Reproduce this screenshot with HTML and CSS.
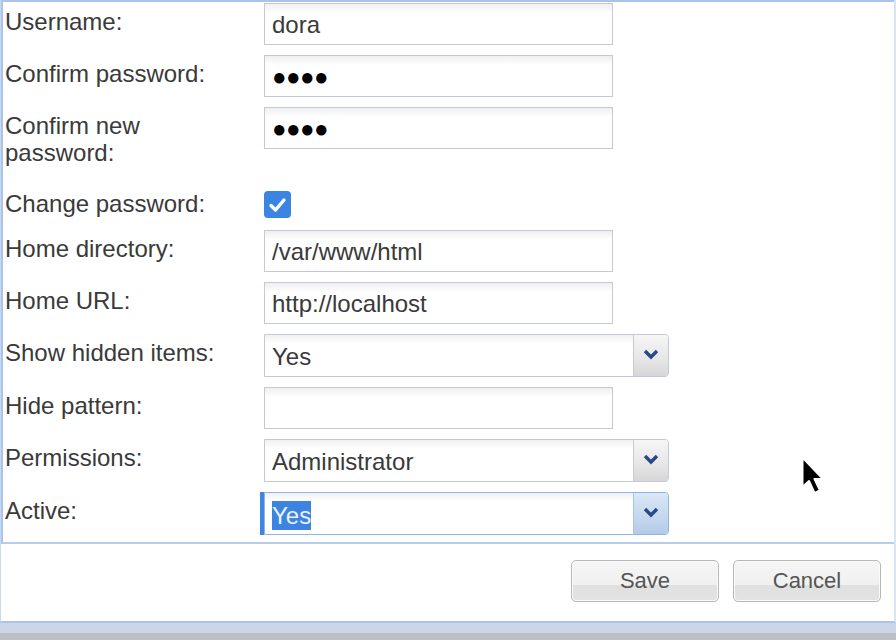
FILE: index.html
```html
<!DOCTYPE html>
<html>
<head>
<meta charset="utf-8">
<link rel="stylesheet" href="styles.css">
</head>
<body>
<div class="dialog">
  <div class="panel">
    <div class="form">
      <div class="row">
        <label class="label">Username:</label>
        <div class="input">dora</div>
      </div>
      <div class="row">
        <label class="label">Confirm password:</label>
        <div class="input dots">&#9679;&#9679;&#9679;&#9679;</div>
      </div>
      <div class="row tall">
        <label class="label">Confirm new password:</label>
        <div class="input dots">&#9679;&#9679;&#9679;&#9679;</div>
      </div>
      <div class="row check-row">
        <label class="label">Change password:</label>
        <div class="checkbox">
          <svg width="27" height="27" viewBox="0 0 27 27"><path d="M7 14.5 L11.5 19 L20 9" fill="none" stroke="#fff" stroke-width="3.4" stroke-linecap="round" stroke-linejoin="round"/></svg>
        </div>
      </div>
      <div class="row">
        <label class="label">Home directory:</label>
        <div class="input">/var/www/html</div>
      </div>
      <div class="row">
        <label class="label">Home URL:</label>
        <div class="input">http://localhost</div>
      </div>
      <div class="row">
        <label class="label">Show hidden items:</label>
        <div class="select">
          <span class="select-text">Yes</span>
          <span class="select-btn"><svg width="16" height="11" viewBox="0 0 16 11"><path d="M2 2 L8 8 L14 2" fill="none" stroke="#27498a" stroke-width="3.4"/></svg></span>
        </div>
      </div>
      <div class="row">
        <label class="label">Hide pattern:</label>
        <div class="input"></div>
      </div>
      <div class="row">
        <label class="label">Permissions:</label>
        <div class="select">
          <span class="select-text">Administrator</span>
          <span class="select-btn"><svg width="16" height="11" viewBox="0 0 16 11"><path d="M2 2 L8 8 L14 2" fill="none" stroke="#27498a" stroke-width="3.4"/></svg></span>
        </div>
      </div>
      <div class="row">
        <label class="label">Active:</label>
        <div class="select focused">
          <span class="select-text"><span class="hl">Yes</span></span>
          <span class="select-btn"><svg width="16" height="11" viewBox="0 0 16 11"><path d="M2 2 L8 8 L14 2" fill="none" stroke="#27498a" stroke-width="3.4"/></svg></span>
        </div>
      </div>
    </div>
  </div>
  <div class="actions">
    <button class="btn">Save</button>
    <button class="btn">Cancel</button>
  </div>
</div>
<div class="strip"></div>
<svg class="cursor" width="28" height="44" viewBox="0 0 28 44">
  <path d="M2.5 2.5 L2.5 32 L9 26 L14.5 38 L20 35.5 L14.5 24 L23 24 Z" fill="#000" stroke="#fff" stroke-width="2" stroke-linejoin="round"/>
</svg>
</body>
</html>
```
FILE: styles.css
```css
html, body {
  margin: 0;
  padding: 0;
}
body {
  width: 896px;
  height: 640px;
  overflow: hidden;
  background: #bdbfc2;
  font-family: "Liberation Sans", Arial, sans-serif;
  color: #363636;
  position: relative;
}
.dialog {
  width: 896px;
  height: 623px;
  box-sizing: border-box;
  background: #fff;
  border-left: 1px solid #c9d8ec;
  border-right: 2px solid #dbe5f1;
  border-bottom: 2px solid #a9c5e9;
  display: flex;
  flex-direction: column;
}
.panel {
  height: 544px;
  box-sizing: border-box;
  border-top: 2px solid #a9c4e8;
  border-left: 2px solid #a9c5ea;
  border-bottom: 2px solid #b6cdec;
  padding: 1px 0 0 2px;
}
.form {
  display: flex;
  flex-direction: column;
  gap: 10px;
}
.row {
  display: grid;
  grid-template-columns: 259px auto;
  align-items: start;
}
.row.tall {
  padding-bottom: 9px;
}
.label {
  display: block;
  width: 236px;
  padding-top: 5px;
  font-size: 24px;
  line-height: 27px;
  color: #3a3a3a;
}
.input {
  width: 349px;
  height: 42px;
  box-sizing: border-box;
  border: 1px solid #c5c8d8;
  background: linear-gradient(#efefef, #fff 9px);
  padding: 2px 7px 0;
  font-size: 24px;
  line-height: 38px;
  color: #3a3a3a;
  white-space: nowrap;
}
.input.dots {
  font-size: 24px;
  color: #000;
  letter-spacing: -0.5px;
}
.check-row .checkbox {
  margin: 6px 0 2px;
}
.checkbox {
  width: 27px;
  height: 27px;
  border-radius: 4px;
  background: #3a84e2;
}
.checkbox svg {
  display: block;
}
.select {
  width: 405px;
  height: 43px;
  box-sizing: border-box;
  border: 1px solid #c5c8d8;
  border-radius: 0 4px 4px 0;
  background: linear-gradient(#f1f1f1, #fff 9px);
  display: flex;
  overflow: hidden;
}
.select-text {
  flex: 1;
  padding: 2px 7px 0;
  font-size: 24px;
  line-height: 39px;
  color: #3a3a3a;
}
.select-btn {
  width: 34px;
  border-left: 1px solid #c9cbd4;
  background: linear-gradient(#f6f6f6, #e6e6e6 60%, #d6d6d6);
  display: flex;
  align-items: center;
  justify-content: center;
}
.select-btn svg {
  display: block;
  margin-top: -2px;
}
.select.focused {
  border-color: #8fb4e6;
  box-shadow: -4px 0 0 #3f86e1;
}
.select.focused .select-btn {
  border-left-color: #a9c3e6;
  background: linear-gradient(#dae7f6, #c4d7ee 60%, #b3cae8);
}
.hl {
  background: #3d83e0;
  color: #eaf2ff;
  display: inline-block;
  line-height: 29px;
  vertical-align: middle;
  margin-top: -3px;
}
.actions {
  flex: 1;
  display: flex;
  justify-content: flex-end;
  align-items: flex-start;
  gap: 14px;
  padding: 16px 13px 0 0;
}
.btn {
  width: 148px;
  height: 42px;
  box-sizing: border-box;
  border: 1px solid #b8b8b8;
  border-radius: 5px;
  background: linear-gradient(#f5f5f5, #f0f0f0 60%, #e0e0e0 61%, #e3e3e3);
  box-shadow: inset 0 0 0 1px #fafafa;
  font-family: "Liberation Sans", Arial, sans-serif;
  font-size: 22px;
  color: #555;
  padding: 0;
}
.strip {
  height: 10px;
  background: #cbd7e6;
}
.cursor {
  position: absolute;
  left: 800px;
  top: 455px;
}
```
